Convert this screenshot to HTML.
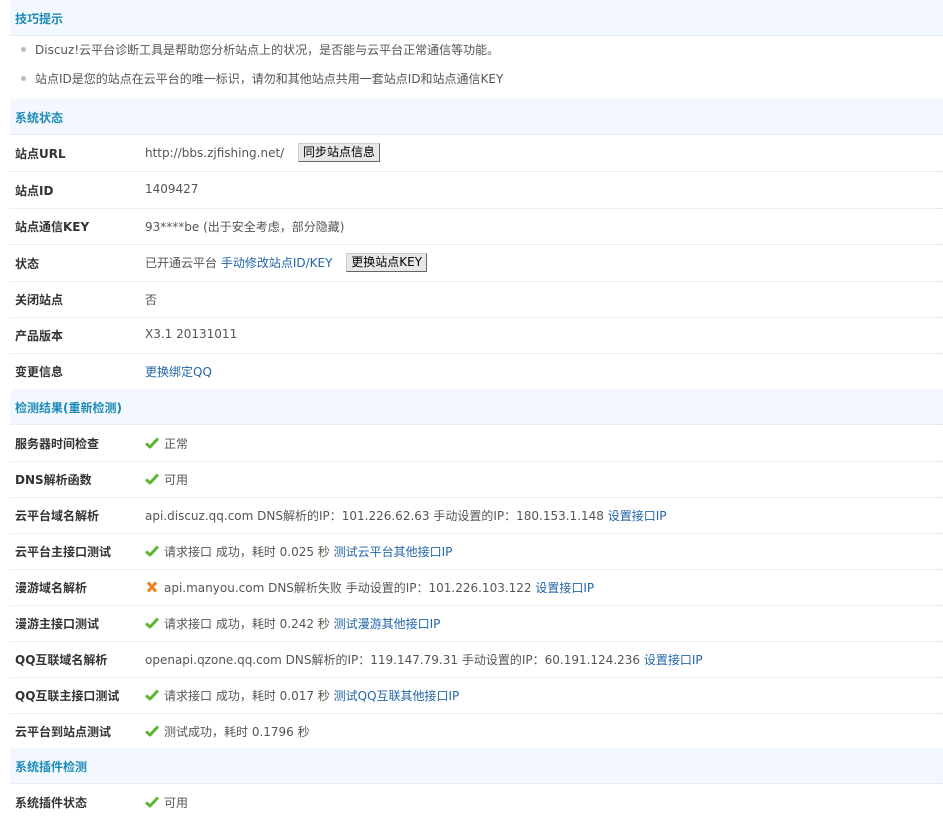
<!DOCTYPE html>
<html><head><meta charset="utf-8"><style>
body{margin:0;width:943px;height:815px;overflow:hidden;background:#fff;font:12px "DejaVu Sans","Noto Sans CJK SC",sans-serif;color:#555;position:relative}
.h{position:absolute;left:10px;width:933px;height:35px;background:#f2f8fd;border-bottom:1px dotted #dde;}
.h span{position:absolute;left:5px;top:10px;font-weight:bold;color:#1b8ab8}
.r{position:absolute;left:10px;width:933px;height:36px;border-bottom:1px dotted #ddd}
.r b{position:absolute;left:5px;top:10px;color:#333}
.r .v{position:absolute;left:135px;top:10px;white-space:nowrap}
a{color:#2366a8;text-decoration:none}
.btn{display:inline-block;background:#e8e8e8;border:1px solid #888;border-color:#ccc #666 #666 #ccc;color:#000;padding:1px 4px;margin-left:10px;line-height:15px;position:relative;top:-1px}
.ok,.no{display:inline-block;width:14px;height:12px;vertical-align:-1px;margin-right:5px}
.tip{position:absolute;left:35px;white-space:nowrap}
.dot{position:absolute;left:21px;width:5px;height:5px;border-radius:50%;background:#bbb}
</style></head><body>
<div class="h" style="top:0"><span>技巧提示</span></div>
<div class="dot" style="top:47px"></div><div class="tip" style="top:41px">Discuz!云平台诊断工具是帮助您分析站点上的状况，是否能与云平台正常通信等功能。</div>
<div class="dot" style="top:76px"></div><div class="tip" style="top:70px">站点ID是您的站点在云平台的唯一标识，请勿和其他站点共用一套站点ID和站点通信KEY</div>
<div class="h" style="top:99px"><span>系统状态</span></div>
<div class="r" style="top:135px"><b>站点URL</b><span class="v" style="top:9px">http://bbs.zjfishing.net/ <span class="btn">同步站点信息</span></span></div>
<div class="r" style="top:172px"><b>站点ID</b><span class="v">1409427</span></div>
<div class="r" style="top:208px"><b>站点通信KEY</b><span class="v">93****be (出于安全考虑，部分隐藏)</span></div>
<div class="r" style="top:245px"><b>状态</b><span class="v" style="top:9px">已开通云平台 <a>手动修改站点ID/KEY</a> <span class="btn">更换站点KEY</span></span></div>
<div class="r" style="top:281px"><b>关闭站点</b><span class="v">否</span></div>
<div class="r" style="top:317px"><b>产品版本</b><span class="v">X3.1 20131011</span></div>
<div class="r" style="top:353px"><b>变更信息</b><span class="v"><a>更换绑定QQ</a></span></div>
<div class="h" style="top:389px"><span>检测结果(重新检测)</span></div>
<svg width="0" height="0" style="position:absolute"><defs><symbol id="ck" viewBox="0 0 14 12"><path d="M1 6.5 L5 10 L13 1.5" fill="none" stroke="#5db530" stroke-width="3" stroke-linejoin="round"/></symbol><symbol id="x" viewBox="0 0 14 12"><path d="M3 1.5 L11 10.5 M11 1.5 L3 10.5" stroke="#f08020" stroke-width="3"/></symbol></defs></svg>
<div class="r" style="top:425px"><b>服务器时间检查</b><span class="v"><svg class="ok"><use href="#ck"/></svg>正常</span></div>
<div class="r" style="top:461px"><b>DNS解析函数</b><span class="v"><svg class="ok"><use href="#ck"/></svg>可用</span></div>
<div class="r" style="top:497px"><b>云平台域名解析</b><span class="v">api.discuz.qq.com DNS解析的IP：101.226.62.63 手动设置的IP：180.153.1.148 <a>设置接口IP</a></span></div>
<div class="r" style="top:533px"><b>云平台主接口测试</b><span class="v"><svg class="ok"><use href="#ck"/></svg>请求接口 成功，耗时 0.025 秒 <a>测试云平台其他接口IP</a></span></div>
<div class="r" style="top:569px"><b>漫游域名解析</b><span class="v"><svg class="no"><use href="#x"/></svg>api.manyou.com DNS解析失败 手动设置的IP：101.226.103.122 <a>设置接口IP</a></span></div>
<div class="r" style="top:605px"><b>漫游主接口测试</b><span class="v"><svg class="ok"><use href="#ck"/></svg>请求接口 成功，耗时 0.242 秒 <a>测试漫游其他接口IP</a></span></div>
<div class="r" style="top:641px"><b>QQ互联域名解析</b><span class="v">openapi.qzone.qq.com DNS解析的IP：119.147.79.31 手动设置的IP：60.191.124.236 <a>设置接口IP</a></span></div>
<div class="r" style="top:677px"><b>QQ互联主接口测试</b><span class="v"><svg class="ok"><use href="#ck"/></svg>请求接口 成功，耗时 0.017 秒 <a>测试QQ互联其他接口IP</a></span></div>
<div class="r" style="top:713px"><b>云平台到站点测试</b><span class="v"><svg class="ok"><use href="#ck"/></svg>测试成功，耗时 0.1796 秒</span></div>
<div class="h" style="top:748px"><span>系统插件检测</span></div>
<div class="r" style="top:784px;border:0"><b>系统插件状态</b><span class="v"><svg class="ok"><use href="#ck"/></svg>可用</span></div>
</body></html>
